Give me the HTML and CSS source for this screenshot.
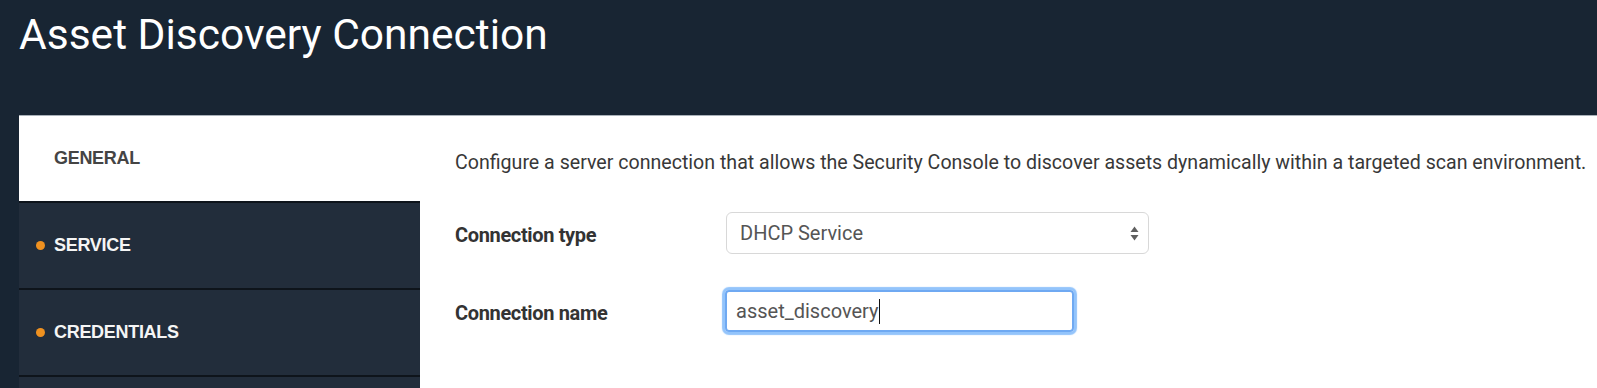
FILE: index.html
```html
<!DOCTYPE html>
<html lang="en">
<head>
<meta charset="utf-8">
<title>Asset Discovery Connection</title>
<link rel="stylesheet" href="styles.css">
</head>
<body>
  <header class="page-header">
    <h1 class="page-title">Asset Discovery Connection</h1>
  </header>
  <section class="panel">
    <nav class="sidebar">
      <div class="tab tab-active"><span class="dot dot-hidden"></span><span class="tab-label">GENERAL</span></div>
      <div class="tab"><span class="dot"></span><span class="tab-label">SERVICE</span></div>
      <div class="tab"><span class="dot"></span><span class="tab-label">CREDENTIALS</span></div>
      <div class="tab"><span class="dot dot-hidden"></span><span class="tab-label"></span></div>
    </nav>
    <main class="content">
      <p class="intro">Configure a server connection that allows the Security Console to discover assets dynamically within a targeted scan environment.</p>
      <div class="form-row">
        <label class="field-label">Connection type</label>
        <div class="select">
          <span class="select-value">DHCP Service</span>
          <svg class="select-arrows" width="9" height="15" viewBox="0 0 9 15" aria-hidden="true">
            <polygon points="0.5,6 4.5,0.5 8.5,6" fill="#5f5f5f"/>
            <polygon points="0.5,9 8.5,9 4.5,14.5" fill="#5f5f5f"/>
          </svg>
        </div>
      </div>
      <div class="form-row form-row-second">
        <label class="field-label">Connection name</label>
        <div class="text-input">asset_discovery<span class="caret"></span></div>
      </div>
    </main>
  </section>
</body>
</html>
```
FILE: styles.css
```css
html, body {
  margin: 0;
  padding: 0;
}

body {
  background: #182533;
  font-family: Roboto, "Noto Sans", "Liberation Sans", sans-serif;
  height: 388px;
  overflow: hidden;
}

.page-header {
  padding: 10px 0 0 19px;
  height: 115px;
  box-sizing: border-box;
}

.page-title {
  margin: 0;
  font-size: 42.5px;
  line-height: 50px;
  font-weight: 400;
  color: #ffffff;
}

.panel {
  margin-left: 19px;
  background: #ffffff;
  border-top: 1px solid #a9b1b9;
  display: flex;
  height: 272px;
  overflow: hidden;
}

.sidebar {
  width: 401px;
  flex: none;
  display: flex;
  flex-direction: column;
}

.tab {
  height: 85px;
  flex: none;
  border-bottom: 2px solid #0e141b;
  background: #222d3b;
  display: flex;
  align-items: center;
  padding-left: 17px;
  font-family: "Liberation Sans", Arial, sans-serif;
  font-weight: 700;
  font-size: 18px;
  letter-spacing: -0.3px;
  color: #f5f5f5;
}

.tab-active {
  background: #ffffff;
  color: #444444;
}

.dot {
  width: 9px;
  height: 9px;
  border-radius: 50%;
  background: #ef9120;
  margin-right: 9px;
  flex: none;
}

.dot-hidden {
  visibility: hidden;
}

.content {
  flex: 1;
  padding: 35px 0 0 35px;
  color: #333333;
}

.intro {
  margin: 0;
  font-size: 19.6px;
  line-height: 24px;
  color: #383838;
  white-space: nowrap;
}

.form-row {
  display: flex;
  align-items: center;
  margin-top: 37px;
}

.form-row-second {
  margin-top: 36px;
}

.field-label {
  width: 271px;
  flex: none;
  padding-top: 3px;
  font-size: 20px;
  font-weight: 700;
  letter-spacing: -0.35px;
  color: #333333;
}

.select {
  width: 423px;
  height: 42px;
  box-sizing: border-box;
  border: 1px solid #d8d8d8;
  border-radius: 6px;
  background: #ffffff;
  display: flex;
  align-items: center;
  justify-content: space-between;
  padding: 0 9px 0 13px;
  font-size: 20px;
  color: #555555;
}

.select-arrows {
  display: block;
}

.text-input {
  width: 349px;
  height: 42px;
  margin-left: -1px;
  box-sizing: border-box;
  border: 2px solid #6fa9f2;
  border-radius: 4px;
  box-shadow: 0 0 1px 3px #93c4fb;
  display: flex;
  align-items: center;
  padding-left: 9px;
  font-size: 20px;
  color: #555555;
}

.caret {
  display: inline-block;
  width: 1px;
  height: 25px;
  background: #111111;
  margin-left: 1px;
}
```
